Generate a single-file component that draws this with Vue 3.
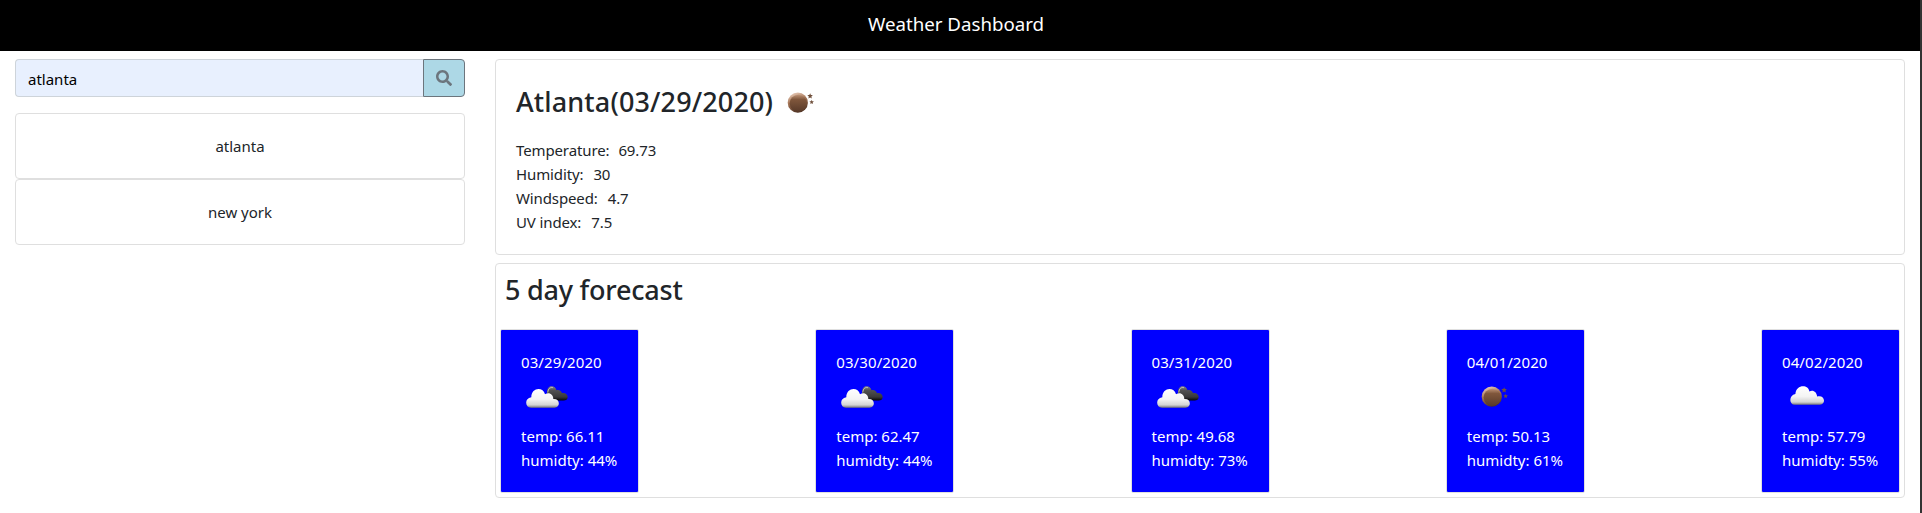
<script setup>
const history = ['atlanta', 'new york']

const current = [
  { label: 'Temperature:', value: '69.73' },
  { label: 'Humidity:', value: '30' },
  { label: 'Windspeed:', value: '4.7' },
  { label: 'UV index:', value: '7.5' },
]

const forecast = [
  { date: '03/29/2020', icon: 'clouds', temp: '66.11', humidity: 44 },
  { date: '03/30/2020', icon: 'clouds', temp: '62.47', humidity: 44 },
  { date: '03/31/2020', icon: 'clouds', temp: '49.68', humidity: 73 },
  { date: '04/01/2020', icon: 'moon', temp: '50.13', humidity: 61 },
  { date: '04/02/2020', icon: 'cloud', temp: '57.79', humidity: 55 },
]
</script>

<template>
  <div class="page">
    <svg class="sprite" aria-hidden="true">
      <defs>
        <linearGradient id="white-cloud" x1="0" y1="0" x2="0" y2="1">
          <stop offset="0" stop-color="#ffffff" />
          <stop offset=".55" stop-color="#f4f4f4" />
          <stop offset=".85" stop-color="#d4d4d4" />
          <stop offset="1" stop-color="#777777" />
        </linearGradient>
        <linearGradient id="dark-cloud" x1="0" y1="0" x2="0" y2="1">
          <stop offset="0" stop-color="#858585" />
          <stop offset=".3" stop-color="#505050" />
          <stop offset=".75" stop-color="#393939" />
          <stop offset="1" stop-color="#050505" />
        </linearGradient>
        <linearGradient id="moon-rim" x1=".15" y1="0" x2=".5" y2="1">
          <stop offset="0" stop-color="#f0d5c3" />
          <stop offset=".45" stop-color="#a47455" />
          <stop offset="1" stop-color="#4b2f20" />
        </linearGradient>
        <linearGradient id="moon-face" x1="0" y1="0" x2="0" y2="1">
          <stop offset="0" stop-color="#bd9275" />
          <stop offset=".28" stop-color="#80573c" />
          <stop offset="1" stop-color="#583a29" />
        </linearGradient>
        <symbol id="clouds" viewBox="0 0 50 50">
          <path
            fill="url(#dark-cloud)"
            d="M26 18C26 11 34 10.500 35.500 16.300C38 15.300 40.500 17 41 19.300C44 18.500 46.700 20.500 46.700 23C46.700 25.500 45 26.500 42.500 26.500H31C28 26.500 26 24 26 18Z"
          />
          <path
            d="M26.800 18.500C27 14.500 29.500 13 32 13.700"
            fill="none"
            stroke="#bdbdbd"
            stroke-width="1"
          />
          <path
            fill="url(#white-cloud)"
            d="M10 33.700C3.800 33.700 3.300 24 10.300 23.300C10.300 13 22.300 12.500 24 20.300C28 17.500 32.500 20.500 32.300 25C39.500 24.500 39.500 33.700 33.500 33.700Z"
          />
        </symbol>
        <symbol id="cloud" viewBox="0 0 50 50">
          <path
            fill="url(#white-cloud)"
            d="M12.800 30.800C7 30.800 6.500 21.300 13.400 20C14 10 26.500 10 27.400 17.500C31 15.500 34.800 18 35.100 22.600C43.500 20.700 44 30.800 38 30.800Z"
          />
        </symbol>
        <symbol id="moon" viewBox="0 0 50 50">
          <circle cx="24.800" cy="22.700" r="10.100" fill="url(#moon-rim)" />
          <circle cx="25.300" cy="23.300" r="8.600" fill="url(#moon-face)" />
          <g fill="#70503c">
            <path d="M37.200 13.200l.7 1.800 2 .1-1.500 1.400.4 2-1.700-1-1.700 1 .4-2-1.500-1.400 2-.1z" />
            <path d="M38.700 19.700l.6 1.500 1.600.1-1.200 1.100.3 1.700-1.300-.9-1.400.9.300-1.700-1.200-1.100 1.700-.1z" />
          </g>
        </symbol>
      </defs>
    </svg>

    <div class="content">
      <header class="title-bar">Weather Dashboard</header>
      <div class="columns">
        <aside class="sidebar">
          <form class="search" @submit.prevent>
            <input class="search-input" type="text" value="atlanta" />
            <button class="search-button" type="submit" aria-label="Search">
              <svg viewBox="0 0 512 512" width="16" height="16">
                <path
                  fill="currentColor"
                  d="M505 442.700L405.300 343c-4.500-4.500-10.600-7-17-7H372c27.600-35.300 44-79.700 44-128C416 93.100 322.900 0 208 0S0 93.100 0 208s93.100 208 208 208c48.300 0 92.700-16.400 128-44v16.300c0 6.400 2.500 12.500 7 17l99.700 99.700c9.400 9.400 24.600 9.400 33.900 0l28.300-28.300c9.400-9.400 9.400-24.600.1-34zM208 336c-70.700 0-128-57.200-128-128 0-70.700 57.200-128 128-128 70.700 0 128 57.200 128 128 0 70.700-57.200 128-128 128z"
                />
              </svg>
            </button>
          </form>
          <div v-for="city in history" :key="city" class="card city">{{ city }}</div>
        </aside>

        <main class="main">
          <section class="card current">
            <h2 class="heading">
              <span class="heading-text">Atlanta(03/29/2020)</span>
              <svg class="weather-icon"><use href="#moon" /></svg>
            </h2>
            <div v-for="row in current" :key="row.label" class="reading">
              <span>{{ row.label }}</span><span>{{ row.value }}</span>
            </div>
          </section>

          <section class="card forecast">
            <h2 class="forecast-title">5 day forecast</h2>
            <div class="days">
              <div v-for="day in forecast" :key="day.date" class="card day">
                <div class="day-body">
                  <div class="day-date">{{ day.date }}</div>
                  <svg class="weather-icon"><use :href="'#' + day.icon" /></svg>
                  <div>temp: {{ day.temp }}</div>
                  <div>humidty: {{ day.humidity }}%</div>
                </div>
              </div>
            </div>
          </section>
        </main>
      </div>
    </div>
    <div class="window-edge"></div>
  </div>
</template>

<style>
body {
  background: #fff;
  overflow: hidden;
}
</style>

<style scoped>
* {
  box-sizing: border-box;
}
.page {
  display: flex;
  height: 513px;
  color: #212529;
  font: 15px/24px "Noto Sans", "Open Sans", sans-serif;
}
.sprite {
  position: absolute;
  width: 0;
  height: 0;
}
.content {
  flex: 1;
  min-width: 0;
}
.window-edge {
  width: 2px;
  background: #333;
}
.title-bar {
  height: 51px;
  padding-right: 8px;
  background: #000;
  color: #fff;
  font-size: 18.7px;
  line-height: 48px;
  text-align: center;
}
.columns {
  display: grid;
  grid-template-columns: 450px 1410px;
  gap: 30px;
  padding: 8px 15px 0;
}
.search {
  display: flex;
  height: 38px;
  margin-bottom: 16px;
}
.search-input {
  flex: 1;
  min-width: 0;
  padding: 1px 12px 0;
  border: 1px solid #ced4da;
  border-right: 0;
  border-radius: 4px 0 0 4px;
  background: #e8f0fe;
  color: #000;
  font: inherit;
  outline: 0;
}
.search-button {
  width: 42px;
  padding: 0 0 1px;
  border: 1px solid #6c757d;
  border-radius: 0 4px 4px 0;
  background: #add8e6;
  color: #6c757d;
}
.search-button svg {
  display: block;
  margin: 0 auto;
}
.card {
  border: 1px solid #dfdfdf;
  border-radius: 4px;
  background: #fff;
}
.city {
  height: 66px;
  padding: 20px;
  text-align: center;
}
.current {
  height: 196px;
  padding: 20px;
}
.heading {
  display: flex;
  height: 51px;
  margin: 0 0 7px;
  font-size: 27px;
  font-weight: 500;
  line-height: 44px;
  letter-spacing: 0.13px;
}
.weather-icon {
  display: block;
  width: 50px;
  height: 50px;
}
.reading {
  display: flex;
  gap: 9px;
  letter-spacing: -0.12px;
}
.reading + .reading {
  gap: 10px;
}
.forecast {
  height: 235px;
  margin-top: 8px;
  padding: 8px 4px 4px;
}
.forecast-title {
  height: 57px;
  margin: 0;
  padding-left: 5px;
  font-size: 27px;
  font-weight: 500;
  line-height: 36px;
  letter-spacing: -0.22px;
}
.days {
  display: flex;
  justify-content: space-between;
}
.day {
  width: 139px;
  height: 164px;
  overflow: hidden;
  border-radius: 2px;
}
.day-body {
  height: 162px;
  padding: 20px;
  background: #00f;
  color: #fff;
  white-space: nowrap;
}
.day-date {
  letter-spacing: 0.1px;
}
</style>
